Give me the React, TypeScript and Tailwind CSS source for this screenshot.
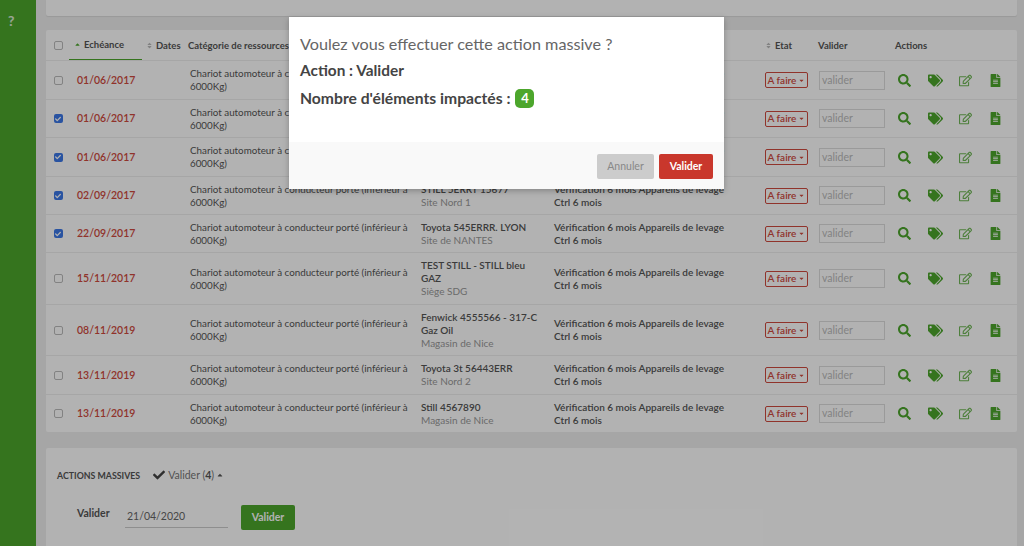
import { FaSearch, FaTags, FaRegEdit, FaFileAlt, FaCheck, FaSort, FaCaretUp, FaCaretDown } from "react-icons/fa";

const cols = "grid-cols-[23px_73px_44px_233px_133px_210px_53px_77px_125px]";
const cat = "Chariot automoteur à conducteur porté (inférieur à 6000Kg)";
const rows = [
  { h: "h-[39px]", date: "01/06/2017", on: false, res: [] as string[], site: "" },
  { h: "h-[38px]", date: "01/06/2017", on: true, res: [] as string[], site: "" },
  { h: "h-[39px]", date: "01/06/2017", on: true, res: [] as string[], site: "" },
  { h: "h-[38px]", date: "02/09/2017", on: true, res: ["STILL 5ERRT 15677"], site: "Site Nord 1" },
  { h: "h-[38px]", date: "22/09/2017", on: true, res: ["Toyota 545ERRR. LYON"], site: "Site de NANTES" },
  { h: "h-[52px]", date: "15/11/2017", on: false, res: ["TEST STILL - STILL bleu", "GAZ"], site: "Siège SDG" },
  { h: "h-[51px]", date: "08/11/2019", on: false, res: ["Fenwick 4555566 - 317-C", "Gaz Oil"], site: "Magasin de Nice" },
  { h: "h-[39px]", date: "13/11/2019", on: false, res: ["Toyota 3t 56443ERR"], site: "Site Nord 2" },
  { h: "h-[38px]", date: "13/11/2019", on: false, res: ["Still 4567890"], site: "Magasin de Nice" },
];

function Check({ on }: { on: boolean }) {
  return on ? (
    <span className="flex h-[9px] w-[9px] items-center justify-center rounded-[2px] bg-[#3b78e7] text-white">
      <FaCheck className="text-[6px]" />
    </span>
  ) : (
    <span className="block h-[9px] w-[9px] rounded-[2px] border border-[#bbb] bg-white" />
  );
}

export default function App() {
  return (
    <div className="relative flex h-[546px] w-[1024px] overflow-hidden bg-[#eeeeee] font-['Lato','Liberation_Sans',sans-serif] text-[10px] leading-[13px] text-[#555]">
      <aside className="w-[36px] shrink-0 bg-[#4ca62c] pt-[13px] pl-[8px]">
        <span className="text-[14px] leading-[16px] font-bold text-white/80">?</span>
      </aside>

      <main className="flex min-w-0 flex-1 flex-col pr-[7px] pl-[10px]">
        <div className="h-[16px] shrink-0 rounded-b-[2px] bg-white shadow-[0_1px_1px_rgba(0,0,0,0.08)]" />

        <section className="mt-[14px] shrink-0 rounded-[2px] bg-white">
          <div className={`grid h-[30px] items-center ${cols} text-[9.5px] font-bold`}>
            <div className="flex justify-center pl-[1px]"><Check on={false} /></div>
            <div className="flex h-full items-center gap-[3px] border-b-[1.5px] border-[#4ca62c] pl-[5px]">
              <FaCaretUp className="text-[7px] text-[#4ca62c]" />Echéance
            </div>
            <div className="flex items-center gap-[3px] pl-[4px]"><FaSort className="text-[7px] text-[#bbb]" />Dates</div>
            <div className="pl-[2px]">Catégorie de ressources</div>
            <div />
            <div />
            <div className="flex items-center gap-[3px] pl-[3px]"><FaSort className="text-[7px] text-[#bbb]" />Etat</div>
            <div className="pl-[3px]">Valider</div>
            <div className="pl-[3px]">Actions</div>
          </div>

          {rows.map((r, i) => (
            <div key={i} className={`grid items-center border-t border-[#eeeeee] ${cols} ${r.h}`}>
              <div className="flex justify-center pl-[1px]"><Check on={r.on} /></div>
              <div className="pl-[8px] text-[10.5px] font-semibold text-[#cf4a3e]">{r.date}</div>
              <div />
              <div className="pl-[4px] text-[9.8px]">{cat}</div>
              <div className="pl-[2px]">
                {r.res.map((l) => (
                  <div key={l} className="font-semibold">{l}</div>
                ))}
                {r.site && <div className="text-[#999]">{r.site}</div>}
              </div>
              <div className="pl-[2px] font-semibold whitespace-nowrap">
                Vérification 6 mois Appareils de levage
                <br />
                Ctrl 6 mois
              </div>
              <div className="flex pl-[3px]">
                <span className="flex h-[16px] w-[43px] items-center justify-center gap-[2px] rounded-[2px] border border-[#cf4a3e] text-[10px] font-semibold text-[#cf4a3e]">
                  A faire <FaCaretDown className="text-[7px]" />
                </span>
              </div>
              <div className="pl-[4px]">
                <div className="flex h-[19px] w-[66px] items-center border border-[#ddd] pl-[2px] text-[10.5px] text-[#bbb]">valider</div>
              </div>
              <div className="flex items-center pl-[6px] text-[13px] text-[#4ca62c]">
                <FaSearch className="w-[13px]" />
                <FaTags className="ml-[17px] text-[15px]" />
                <FaRegEdit className="ml-[16px] opacity-80" />
                <FaFileAlt className="ml-[17px]" />
              </div>
            </div>
          ))}
        </section>

        <section className="mt-[16px] flex-1 rounded-t-[2px] bg-white pt-[20px] pl-[11px]">
          <div className="flex h-[14px] items-center">
            <span className="text-[8.8px] font-bold text-[#555]">ACTIONS MASSIVES</span>
            <FaCheck className="ml-[13px] text-[12px] text-[#444]" />
            <span className="ml-[3px] text-[10.5px] text-[#777]">Valider (<b className="text-[#555]">4</b>)</span>
            <FaCaretUp className="ml-[2px] text-[8px] text-[#555]" />
          </div>
          <div className="mt-[23px] flex items-start pl-[20px]">
            <span className="mt-[2px] w-[48px] text-[10.5px] font-bold">Valider</span>
            <div className="mt-[3px] flex h-[20px] w-[103px] items-center border-b border-[#ccc] pb-[2px] pl-[2px] text-[10.5px] text-[#666]">21/04/2020</div>
            <button className="ml-[13px] h-[25px] w-[54px] rounded-[2px] bg-[#4ca62c] text-[10.5px] font-bold text-white">Valider</button>
          </div>
        </section>
      </main>

      <div className="absolute inset-0 bg-black/30" />

      <div className="absolute top-[17px] left-[289px] flex h-[172px] w-[435px] flex-col bg-white shadow-[0_2px_6px_rgba(0,0,0,0.25)]">
        <div className="flex-1 pt-[17px] pl-[11px]">
          <div className="text-[16.2px] leading-[20px] text-[#666]">Voulez vous effectuer cette action massive ?</div>
          <div className="mt-[7px] text-[15.4px] leading-[18px] font-bold text-[#444]">Action : Valider</div>
          <div className="mt-[9px] flex items-center gap-[5px] text-[15.7px] leading-[20px] font-bold text-[#444]">
            Nombre d'éléments impactés :
            <span className="flex h-[19px] w-[19px] items-center justify-center rounded-[5px] bg-[#4ca62c] text-[13px] text-white">4</span>
          </div>
        </div>
        <div className="flex h-[47px] items-start justify-end gap-[5px] bg-[#f9f9f9] pt-[12px] pr-[11px]">
          <button className="h-[25px] w-[57px] rounded-[2px] bg-[#cccccc] text-[10.5px] text-[#888]">Annuler</button>
          <button className="h-[25px] w-[54px] rounded-[2px] bg-[#c9372c] text-[10.5px] font-bold text-white">Valider</button>
        </div>
      </div>
    </div>
  );
}
